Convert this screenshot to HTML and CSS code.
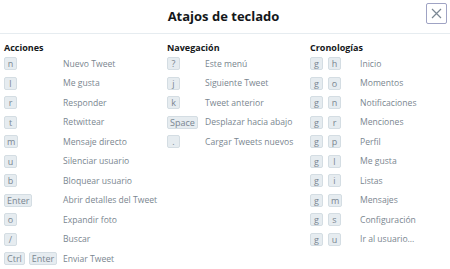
FILE: index.html
```html
<!DOCTYPE html>
<html>
<head lang="es">
    <meta charset="UTF-8">
    <title>Atajos de teclado</title>
    <link rel="stylesheet" href="styles.css">
</head>
<body>
<div class="modal">
    <div class="modal-header">
        <span></span>
        <h3 class="modal-title">Atajos de teclado</h3>
        <button class="modal-close" type="button">
            <svg width="11" height="11" viewBox="0 0 11 11"><path d="M1 1L10 10M10 1L1 10" stroke="#7a8793" stroke-width="1.2" fill="none"/></svg>
        </button>
    </div>
    <div class="modal-body">
        <div class="col col-actions">
            <h4>Acciones</h4>
            <dl>
                <dt><kbd>n</kbd></dt><dd>Nuevo Tweet</dd>
                <dt><kbd>l</kbd></dt><dd>Me gusta</dd>
                <dt><kbd>r</kbd></dt><dd>Responder</dd>
                <dt><kbd>t</kbd></dt><dd>Retwittear</dd>
                <dt><kbd>m</kbd></dt><dd>Mensaje directo</dd>
                <dt><kbd>u</kbd></dt><dd>Silenciar usuario</dd>
                <dt><kbd>b</kbd></dt><dd>Bloquear usuario</dd>
                <dt><kbd>Enter</kbd></dt><dd>Abrir detalles del Tweet</dd>
                <dt><kbd>o</kbd></dt><dd>Expandir foto</dd>
                <dt><kbd>/</kbd></dt><dd>Buscar</dd>
                <dt><kbd>Ctrl</kbd><kbd>Enter</kbd></dt><dd>Enviar Tweet</dd>
            </dl>
        </div>
        <div class="col col-nav">
            <h4>Navegación</h4>
            <dl>
                <dt><kbd>?</kbd></dt><dd>Este menú</dd>
                <dt><kbd>j</kbd></dt><dd>Siguiente Tweet</dd>
                <dt><kbd>k</kbd></dt><dd>Tweet anterior</dd>
                <dt><kbd>Space</kbd></dt><dd>Desplazar hacia abajo</dd>
                <dt><kbd>.</kbd></dt><dd>Cargar Tweets nuevos</dd>
            </dl>
        </div>
        <div class="col col-timelines">
            <h4>Cronologías</h4>
            <dl>
                <dt><kbd>g</kbd><kbd>h</kbd></dt><dd>Inicio</dd>
                <dt><kbd>g</kbd><kbd>o</kbd></dt><dd>Momentos</dd>
                <dt><kbd>g</kbd><kbd>n</kbd></dt><dd>Notificaciones</dd>
                <dt><kbd>g</kbd><kbd>r</kbd></dt><dd>Menciones</dd>
                <dt><kbd>g</kbd><kbd>p</kbd></dt><dd>Perfil</dd>
                <dt><kbd>g</kbd><kbd>l</kbd></dt><dd>Me gusta</dd>
                <dt><kbd>g</kbd><kbd>i</kbd></dt><dd>Listas</dd>
                <dt><kbd>g</kbd><kbd>m</kbd></dt><dd>Mensajes</dd>
                <dt><kbd>g</kbd><kbd>s</kbd></dt><dd>Configuración</dd>
                <dt><kbd>g</kbd><kbd>u</kbd></dt><dd>Ir al usuario...</dd>
            </dl>
        </div>
    </div>
</div>
</body>
</html>
```

FILE: styles.css
```css
*{
    margin:0;
    padding:0;
    box-sizing: border-box;
}
body{
    background:#fff;
    font-family: "Open Sans", "Noto Sans", sans-serif;
    color:#14171a;
}
.modal-header{
    display:grid;
    grid-template-columns: 1fr auto 1fr;
    height:34px;
    padding:3px 3px 0 0;
    border-bottom:1px solid #e6ecf0;
}
.modal-title{
    font-size:13px;
    font-weight:700;
    line-height:20px;
    padding-top:3px;
}
.modal-close{
    justify-self:end;
    width:21px;
    height:21px;
    border:1px solid #9fa3c4;
    border-radius:2px;
    background:#fff;
    display:flex;
    align-items:center;
    justify-content:center;
}
.modal-body{
    display:grid;
    grid-template-columns: 163px 143px 1fr;
    padding:8px 0 0 4px;
}
.col h4{
    font-size:9px;
    font-weight:700;
    line-height:12px;
}
.col dl{
    display:grid;
    grid-auto-rows:19.5px;
    align-items:center;
}
.col-actions dl{ grid-template-columns: 59px 1fr; }
.col-nav dl{ grid-template-columns: 38px 1fr; }
.col-timelines dl{ grid-template-columns: 50px 1fr; }
.col dt{
    display:flex;
    gap:4px;
}
.col-timelines dt{ gap:5px; }
kbd{
    display:inline-block;
    min-width:13px;
    height:13px;
    padding:0 2px;
    font-family:inherit;
    font-size:9px;
    line-height:11px;
    text-align:center;
    color:#7a8690;
    background:#e6ecf0;
    border:1px solid #d4dde3;
    border-radius:2px;
}
.col dd{
    font-size:8.6px;
    color:#7a868f;
    white-space:nowrap;
}
```
